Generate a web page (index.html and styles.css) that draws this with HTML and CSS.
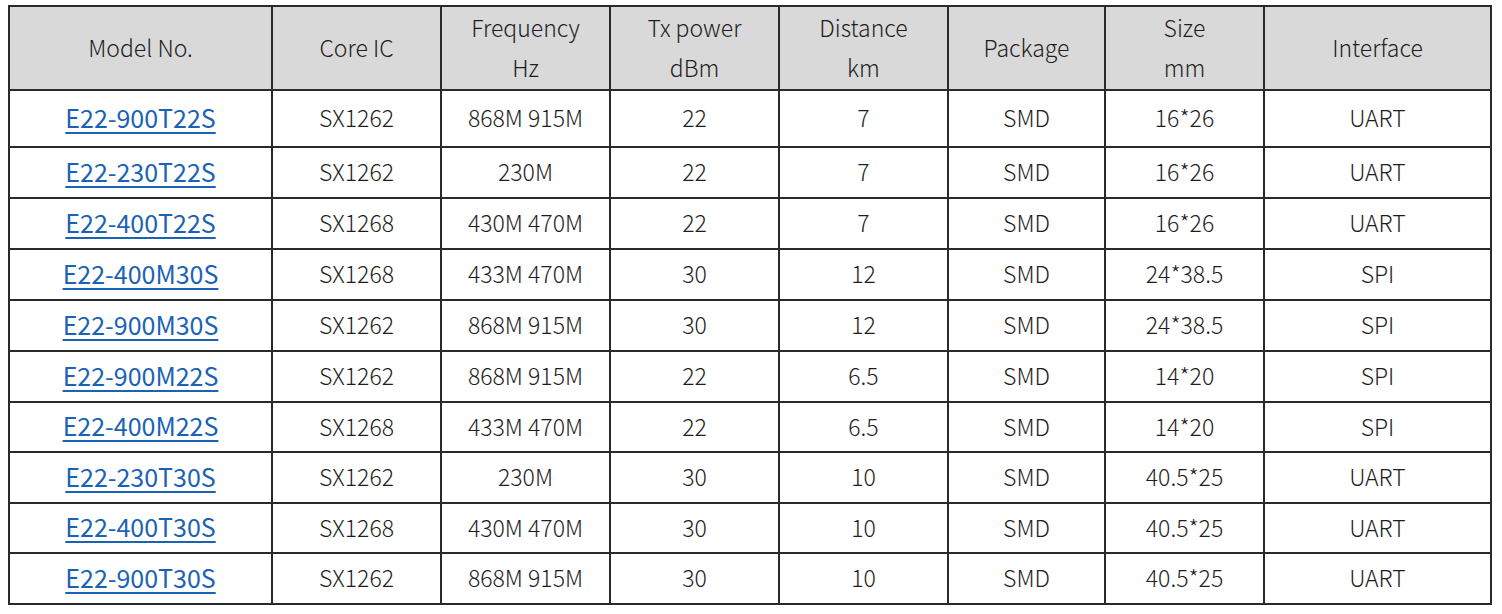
FILE: index.html
```html
<!DOCTYPE html>
<html>
<head>
<meta charset="utf-8">
<link rel="stylesheet" href="styles.css">
</head>
<body>
<table class="spec">
  <colgroup>
    <col class="c-model"><col class="c-ic"><col class="c-freq"><col class="c-tx"><col class="c-dist"><col class="c-pkg"><col class="c-size"><col class="c-if">
  </colgroup>
  <thead>
    <tr class="head">
      <th>Model No.</th>
      <th>Core IC</th>
      <th>Frequency<br>Hz</th>
      <th>Tx power<br>dBm</th>
      <th>Distance<br>km</th>
      <th>Package</th>
      <th>Size<br>mm</th>
      <th>Interface</th>
    </tr>
  </thead>
  <tbody>
    <tr class="first"><td><a href="#">E22-900T22S</a></td><td>SX1262</td><td>868M 915M</td><td>22</td><td>7</td><td>SMD</td><td>16*26</td><td>UART</td></tr>
    <tr><td><a href="#">E22-230T22S</a></td><td>SX1262</td><td>230M</td><td>22</td><td>7</td><td>SMD</td><td>16*26</td><td>UART</td></tr>
    <tr><td><a href="#">E22-400T22S</a></td><td>SX1268</td><td>430M 470M</td><td>22</td><td>7</td><td>SMD</td><td>16*26</td><td>UART</td></tr>
    <tr><td><a href="#">E22-400M30S</a></td><td>SX1268</td><td>433M 470M</td><td>30</td><td>12</td><td>SMD</td><td>24*38.5</td><td>SPI</td></tr>
    <tr><td><a href="#">E22-900M30S</a></td><td>SX1262</td><td>868M 915M</td><td>30</td><td>12</td><td>SMD</td><td>24*38.5</td><td>SPI</td></tr>
    <tr><td><a href="#">E22-900M22S</a></td><td>SX1262</td><td>868M 915M</td><td>22</td><td>6.5</td><td>SMD</td><td>14*20</td><td>SPI</td></tr>
    <tr class="short"><td><a href="#">E22-400M22S</a></td><td>SX1268</td><td>433M 470M</td><td>22</td><td>6.5</td><td>SMD</td><td>14*20</td><td>SPI</td></tr>
    <tr><td><a href="#">E22-230T30S</a></td><td>SX1262</td><td>230M</td><td>30</td><td>10</td><td>SMD</td><td>40.5*25</td><td>UART</td></tr>
    <tr class="short"><td><a href="#">E22-400T30S</a></td><td>SX1268</td><td>430M 470M</td><td>30</td><td>10</td><td>SMD</td><td>40.5*25</td><td>UART</td></tr>
    <tr><td><a href="#">E22-900T30S</a></td><td>SX1262</td><td>868M 915M</td><td>30</td><td>10</td><td>SMD</td><td>40.5*25</td><td>UART</td></tr>
  </tbody>
</table>
</body>
</html>
```
FILE: styles.css
```css
html, body {
  background: #ffffff;
}
body {
  margin: 5px 0 0 8px;
  font-family: "Noto Sans CJK SC", "Liberation Sans", sans-serif;
  color: #1e1e1e;
}
.spec {
  border-collapse: collapse;
  table-layout: fixed;
  width: 1484px;
}
.c-model { width: 263px; }
.c-ic { width: 169px; }
.c-freq { width: 169px; }
.c-tx { width: 169px; }
.c-dist { width: 169px; }
.c-pkg { width: 157px; }
.c-size { width: 159px; }
.c-if { width: 227px; }
.spec th, .spec td {
  border: 2px solid #2a2a2a;
  text-align: center;
  vertical-align: middle;
  padding: 0 0 3px 0;
  font-size: 23px;
  font-weight: 300;
}
.spec th {
  background: #d9d9d9;
  line-height: 40px;
  padding-bottom: 2px;
}
.head { height: 84px; }
.spec tbody tr { height: 51px; }
.spec tbody tr.first { height: 57px; }
.spec tbody tr.short { height: 50px; }
.spec td { line-height: 30px; }
.spec a {
  color: #1a62b6;
  text-decoration: underline;
  text-underline-offset: 4px;
  text-decoration-thickness: 1.5px;
  font-size: 25px;
  font-weight: 400;
}
```
